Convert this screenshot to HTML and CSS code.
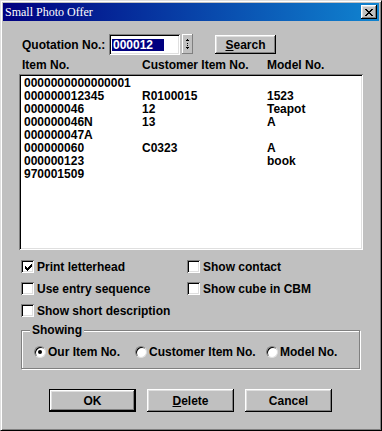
FILE: index.html
```html
<!DOCTYPE html>
<html>
<head>
<meta charset="utf-8">
<title>Small Photo Offer</title>
<link rel="stylesheet" href="styles.css">
</head>
<body>
<div class="window">
  <div class="titlebar">
    <span class="title">Small Photo Offer</span>
    <span class="close">
      <svg width="8" height="7" viewBox="0 0 8 7"><path d="M0 0h2v1h1v1h2v-1h1v-1h2v1h-1v1h-1v1h-1v1h1v1h1v1h1v1h-2v-1h-1v-1h-2v1h-1v1h-2v-1h1v-1h1v-1h1v-1h-1v-1h-1v-1h-1z" fill="#000"/></svg>
    </span>
  </div>
  <div class="content">
    <div class="quote-row">
      <span class="quote-label">Quotation No.:</span>
      <span class="field"><span class="sel">000012</span></span>
      <span class="spin">
        <svg width="7" height="16" viewBox="0 0 7 16"><path d="M3 3h1v1h1v1h-3v-1h1z" fill="#000"/><rect x="3" y="7" width="1" height="1" fill="#000"/><rect x="3" y="9" width="1" height="1" fill="#000"/><path d="M2 11h3v1h-1v1h-1v-1h-1z" fill="#000"/></svg>
      </span>
      <span class="btn search"><u>S</u>earch</span>
    </div>
    <div class="headers">
      <span class="c1">Item No.</span><span class="c2">Customer Item No.</span><span class="c3">Model No.</span>
    </div>
    <div class="listbox">
      <div class="row"><span class="c1">0000000000000001</span><span class="c2"></span><span class="c3"></span></div>
      <div class="row"><span class="c1">000000012345</span><span class="c2">R0100015</span><span class="c3">1523</span></div>
      <div class="row"><span class="c1">000000046</span><span class="c2">12</span><span class="c3">Teapot</span></div>
      <div class="row"><span class="c1">000000046N</span><span class="c2">13</span><span class="c3">A</span></div>
      <div class="row"><span class="c1">000000047A</span><span class="c2"></span><span class="c3"></span></div>
      <div class="row"><span class="c1">000000060</span><span class="c2">C0323</span><span class="c3">A</span></div>
      <div class="row"><span class="c1">000000123</span><span class="c2"></span><span class="c3">book</span></div>
      <div class="row"><span class="c1">970001509</span><span class="c2"></span><span class="c3"></span></div>
    </div>
    <div class="options">
      <label class="opt"><span class="check"><svg width="9" height="9" viewBox="0 0 9 9"><path d="M1 3h1v1h1v1h1v-1h1v-1h1v-1h1v-1h1v3h-1v1h-1v1h-1v1h-1v1h-1v-1h-1v-1h-1z" fill="#000"/></svg></span>Print letterhead</label>
      <label class="opt"><span class="check"></span>Show contact</label>
      <label class="opt"><span class="check"></span>Use entry sequence</label>
      <label class="opt"><span class="check"></span>Show cube in CBM</label>
      <label class="opt"><span class="check"></span>Show short description</label>
    </div>
    <div class="group">
      <span class="legend">Showing</span>
      <div class="radios">
        <label class="radio r1"><span class="dot on"></span>Our Item No.</label>
        <label class="radio r2"><span class="dot"></span>Customer Item No.</label>
        <label class="radio r3"><span class="dot"></span>Model No.</label>
      </div>
    </div>
    <div class="buttons">
      <span class="btn big default">OK</span>
      <span class="btn big"><u>D</u>elete</span>
      <span class="btn big">Cancel</span>
    </div>
  </div>
</div>
</body>
</html>
```
FILE: styles.css
```css
html, body {
  margin: 0;
  padding: 0;
  background: #c0c0c0;
}
body {
  font-family: "Liberation Sans", Arial, sans-serif;
  font-weight: bold;
  font-size: 12px;
  color: #000;
}
.window {
  width: 382px;
  height: 431px;
  box-sizing: border-box;
  background: #c0c0c0;
  border: 1px solid;
  border-color: #dfdfdf #000 #000 #dfdfdf;
  box-shadow: inset 1px 1px #fff, inset -1px -1px #808080;
  padding: 2px;
}
.titlebar {
  height: 18px;
  background: linear-gradient(90deg, #000080, #1084d0);
  display: flex;
  align-items: center;
  justify-content: space-between;
  padding: 0 2px;
}
.title {
  font-family: "Liberation Serif", "Times New Roman", serif;
  font-weight: normal;
  font-size: 12px;
  color: #fff;
}
.close {
  width: 16px;
  height: 14px;
  box-sizing: border-box;
  background: #c0c0c0;
  box-shadow: inset -1px -1px #000, inset 1px 1px #fff, inset -2px -2px #808080, inset 2px 2px #dfdfdf;
  display: flex;
  align-items: center;
  justify-content: center;
}
.close svg { display: block; margin-left: 0; }
.content {
  display: flex;
  flex-direction: column;
  align-items: flex-start;
}
.quote-row {
  display: flex;
  align-items: center;
  margin: 13px 0 0 19px;
  height: 21px;
}
.quote-label {
  width: 87px;
}
.field {
  width: 71px;
  height: 21px;
  box-sizing: border-box;
  background: #fff;
  box-shadow: inset 1px 1px #808080, inset -1px -1px #fff, inset 2px 2px #000, inset -2px -2px #dfdfdf;
  display: flex;
  align-items: center;
  padding-left: 3px;
}
.sel {
  background: #000080;
  color: #fff;
  line-height: 12px;
  padding: 0 11px 0 1px;
}
.spin {
  margin-left: 2px;
  width: 11px;
  height: 20px;
  box-sizing: border-box;
  background: #c0c0c0;
  box-shadow: inset -1px -1px #808080, inset 1px 1px #fff;
  display: flex;
  align-items: center;
  justify-content: center;
  align-self: flex-start;
}
.spin svg { display: block; }
.btn {
  box-sizing: border-box;
  background: #c0c0c0;
  box-shadow: inset -1px -1px #000, inset 1px 1px #fff, inset -2px -2px #808080, inset 2px 2px #dfdfdf;
  display: flex;
  align-items: center;
  justify-content: center;
}
.search {
  margin-left: 22px;
  width: 61px;
  height: 19px;
  align-self: flex-start;
  margin-top: 1px;
}
.headers {
  display: flex;
  margin: 3px 0 0 19px;
  line-height: 14px;
}
.c1 { width: 120px; }
.c2 { width: 125px; }
.c3 { width: 80px; }
.listbox {
  margin: 2px 0 0 16px;
  width: 344px;
  height: 176px;
  box-sizing: border-box;
  background: #fff;
  box-shadow: inset 1px 1px #808080, inset -1px -1px #fff, inset 2px 2px #000, inset -2px -2px #dfdfdf;
  padding: 3px 0 0 5px;
}
.listbox .row {
  display: flex;
  line-height: 13px;
  height: 13px;
}
.listbox .c1 { width: 118px; }
.options {
  display: grid;
  grid-template-columns: 166px 160px;
  grid-auto-rows: 13px;
  row-gap: 9px;
  margin: 10px 0 0 18px;
}
.opt {
  display: flex;
  align-items: center;
  white-space: nowrap;
}
.check {
  width: 13px;
  height: 13px;
  box-sizing: border-box;
  background: #fff;
  box-shadow: inset 1px 1px #808080, inset -1px -1px #fff, inset 2px 2px #000, inset -2px -2px #dfdfdf;
  margin-right: 3px;
  display: flex;
  align-items: center;
  justify-content: center;
}
.check svg { display: block; margin-top: 1px; margin-left: 1px; }
.group {
  position: relative;
  margin: 13px 0 0 18px;
  width: 339px;
  height: 39px;
  box-sizing: border-box;
  border: 1px solid #808080;
  box-shadow: inset 1px 1px #fff, 1px 1px #fff;
}
.legend {
  position: absolute;
  left: 8px;
  top: -8px;
  background: #c0c0c0;
  padding: 0 2px 0 2px;
  line-height: 14px;
}
.radios {
  display: flex;
  align-items: center;
  height: 100%;
  padding-left: 12px;
  padding-top: 4px;
  box-sizing: border-box;
}
.radio {
  display: flex;
  align-items: center;
  white-space: nowrap;
}
.r1 { width: 101px; }
.r2 { width: 131px; }
.dot {
  width: 12px;
  height: 12px;
  box-sizing: border-box;
  border-radius: 50%;
  background: #fff;
  border: 1px solid;
  border-color: #808080 #dfdfdf #dfdfdf #808080;
  box-shadow: inset 1px 1px #000;
  margin-right: 2px;
  position: relative;
}
.dot.on::after {
  content: "";
  position: absolute;
  left: 3px;
  top: 3px;
  width: 4px;
  height: 4px;
  border-radius: 50%;
  background: #000;
}
.buttons {
  display: flex;
  gap: 11px;
  margin: 20px 0 0 46px;
}
.big {
  width: 87px;
  height: 23px;
}
.default {
  box-shadow: inset 0 0 0 1px #000, inset -2px -2px #000, inset 2px 2px #fff, inset -3px -3px #808080, inset 3px 3px #dfdfdf;
}
u { text-decoration: underline; text-underline-offset: 1px; }
```
